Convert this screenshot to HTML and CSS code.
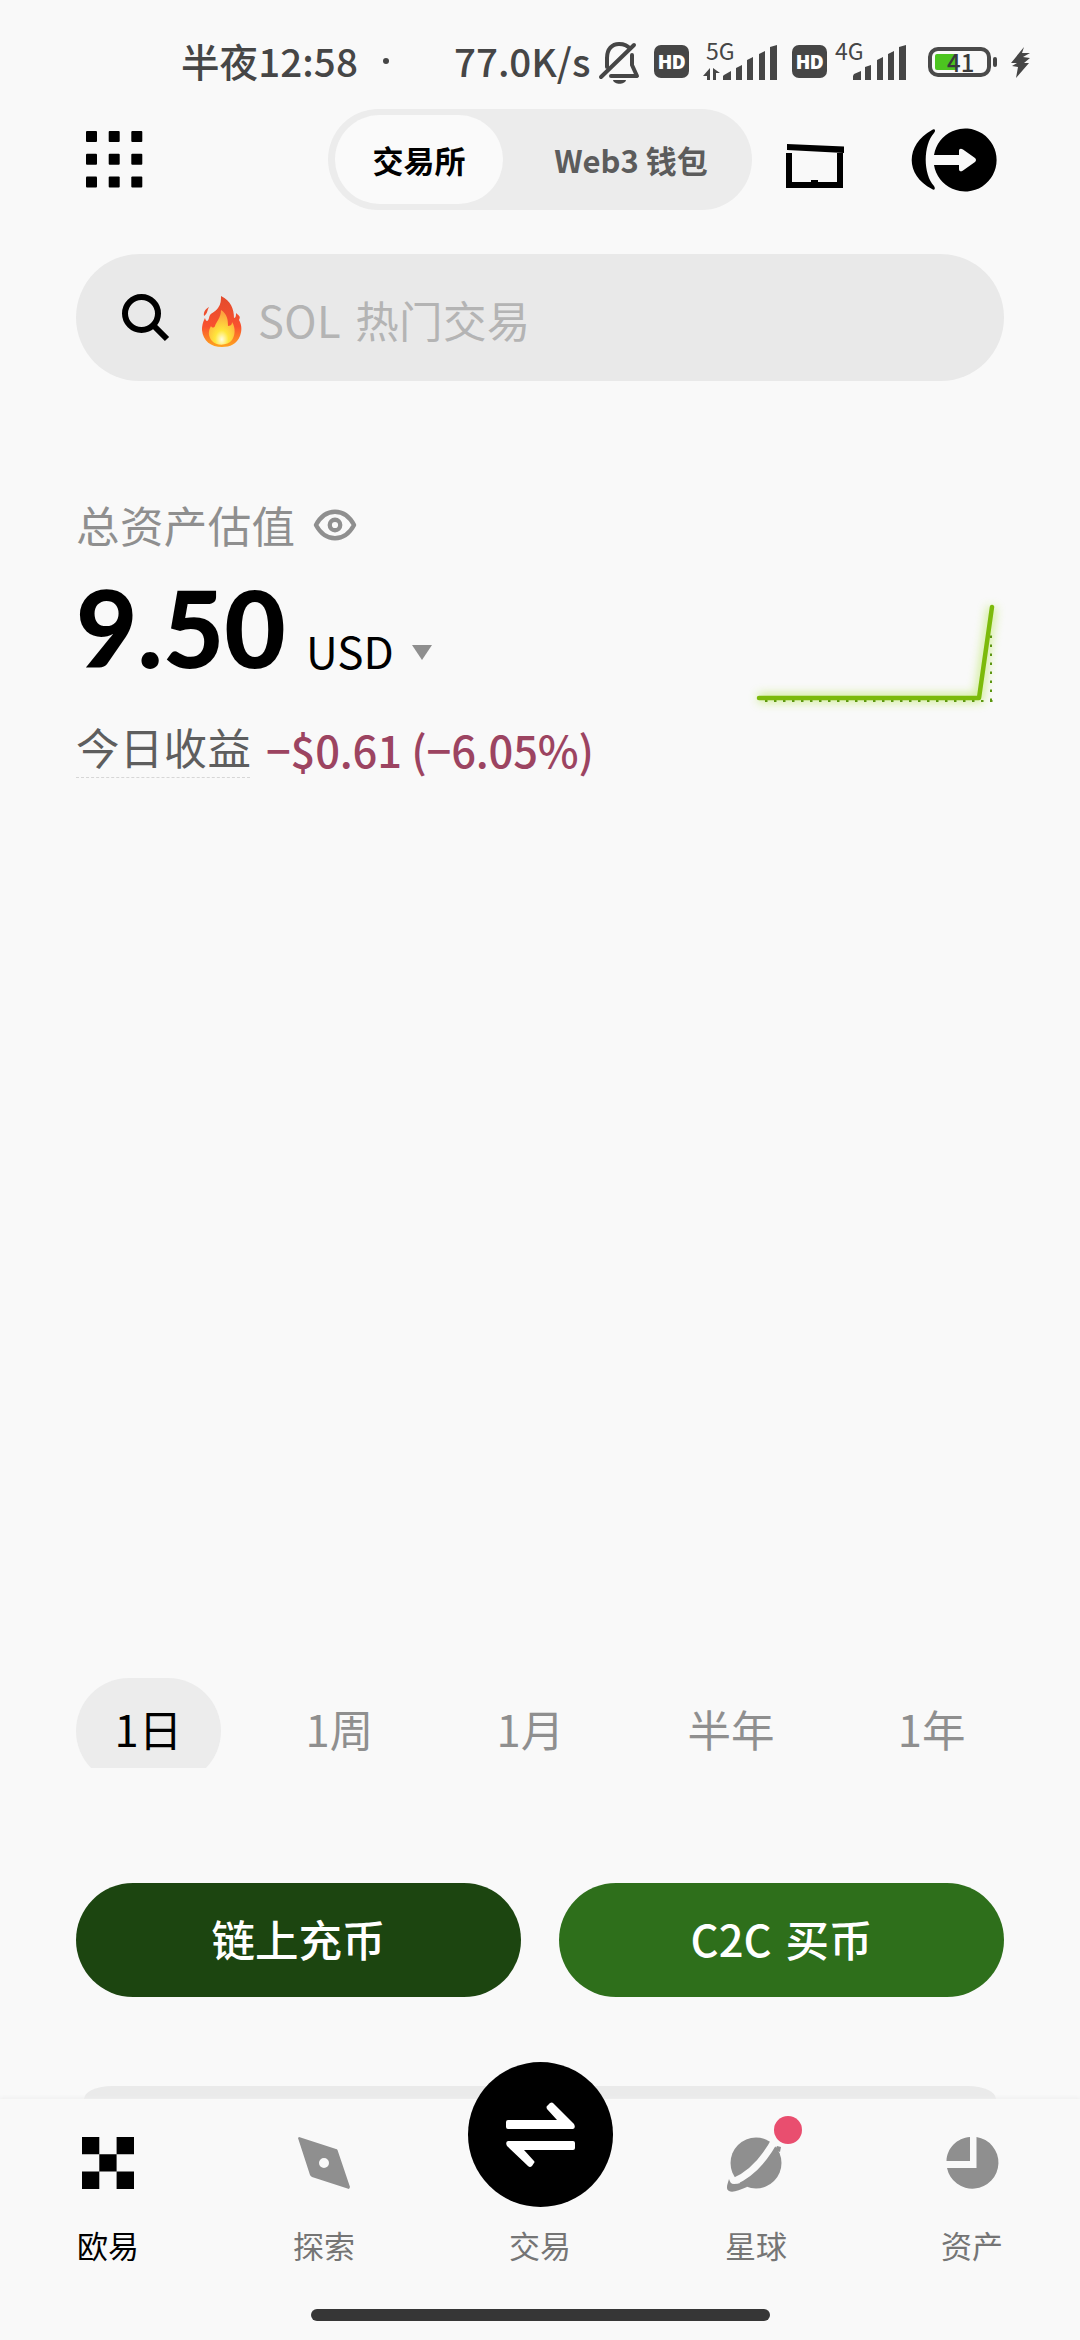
FILE: index.html
```html
<!DOCTYPE html>
<html lang="zh-CN">
<head>
<meta charset="utf-8">
<title>欧易</title>
<link rel="stylesheet" href="styles.css">
</head>
<body>
<div class="screen">
  <div class="status">
    <span class="clock">半夜12:58</span>
    <i class="dot"></i>
    <span class="speed">77.0K/s</span>
    <svg class="bell" width="41" height="45" viewBox="0 0 41 45" fill="none" stroke="#464646" stroke-width="4">
      <path d="M8 26V17C8 8 13 3 20 3C26 3 29 5 31 8M33 14V24L38 35H12M2 36L35 4" stroke-linejoin="round" stroke-linecap="round"/>
      <path d="M14 39H27C26 44 15 44 14 39Z" fill="#464646" stroke="none"/>
    </svg>
    <span class="hd">HD</span>
    <span class="cell cell-5g"><b>5G</b>
      <svg width="75" height="36" viewBox="0 0 75 36" fill="#464646"><path d="M7 23V35H4V31H0ZM10 35V23L17 28H13V35ZM21 30L28 26V35H20V31ZM33 23L39 20V35H33ZM44 15L50 12V35H44ZM56 9L62 6V35H56ZM67 2L74 0V35H67Z"/></svg>
    </span>
    <span class="hd">HD</span>
    <span class="cell cell-4g"><b>4G</b>
      <svg width="54" height="36" viewBox="0 0 54 36" fill="#464646"><path d="M1 29L8 26V35H0V31ZM12 22L18 20V35H12ZM24 15L30 12V35H24ZM35 9L41 6V35H35ZM46 2L53 0V35H46Z"/></svg>
    </span>
    <span class="battery"><i></i><b>41</b></span>
    <svg class="bolt" width="19" height="31" viewBox="0 0 19 31" fill="#464646"><path d="M13 0L0 16H6L1 19L7 20L5 31L18 16H13L19 11L12 10L19 6H11Z"/></svg>
  </div>

  <header class="header">
    <svg class="grid" width="57" height="57" viewBox="0 0 57 57"><g id="dots"><rect width="11" height="11" rx="1"/><rect x="22.7" width="11" height="11" rx="1"/><rect x="45.3" width="11" height="11" rx="1"/></g><use href="#dots" y="22.7"/><use href="#dots" y="45.5"/></svg>
    <div class="segment"><span class="seg seg-on">交易所</span><span class="seg seg-off">Web3 钱包</span></div>
    <svg class="window" width="58" height="44" viewBox="0 0 58 44"><path d="M1 0L58 2.500V9L1 6ZM0 9H6V38H25V36H32V38H51V9H57V44H0Z"/></svg>
    <svg class="scan" width="86" height="64" viewBox="0 0 86 64"><path d="M20 2C23 0 24 3 22 5C11 17 11 46 22 58C24 61 22 63 20 61C-7 47 -7 17 20 2Z"/><path d="M22 27A31.5 31.5 0 1 1 22 37H47V41C47 43.5 49 44 51 42.5L63 34Q65 32 63 30L51 21.5C49 20 47 20.500 47 23V27Z"/></svg>
  </header>

  <div class="search">
    <svg class="magnifier" width="48" height="48" viewBox="0 0 48 48" fill="none" stroke="#000" stroke-width="6"><circle cx="19.500" cy="19.500" r="16.500"/><path d="M31 31L45 45"/></svg>
    <svg class="flame" width="40" height="51" viewBox="0 0 40 51">
      <defs>
        <linearGradient id="outer" x1="0" y1="0" x2="0" y2="1"><stop offset="0" stop-color="#e24b2c"/><stop offset=".6" stop-color="#f9512f"/><stop offset="1" stop-color="#ffa51e"/></linearGradient>
        <radialGradient id="inner" cx=".5" cy=".85" r=".75"><stop offset="0" stop-color="#fffce0"/><stop offset=".35" stop-color="#ffe63c"/><stop offset="1" stop-color="#fda23f"/></radialGradient>
      </defs>
      <path fill="url(#outer)" d="M19 0C29 5 32 13 32 22C34 22 34 19 34 17C37 20 39 20 37 24C40 29 40 35 38 40C35 48 28 51 20 51C9 51 1 45 0 34C0 28 2 24 3 22C4 26 6 26 7 22C8 16 13 17 16 12C19 8 19 4 19 0ZM2 20C1 15 5 12 7 11C5 14 6 17 2 20Z"/>
      <path fill="url(#inner)" d="M19 14C25 18 26 23 26 30C30 30 30 27 30 26C34 32 33 40 30 44C26 50 14 50 10 45C6 40 6 35 9 30C10 32 12 32 13 30C14 26 19 22 19 14Z"/>
    </svg>
    <span class="hint">SOL 热门交易</span>
  </div>

  <section class="assets">
    <div class="title"><span>总资产估值</span>
      <svg width="42" height="32" viewBox="0 0 44 32" fill="none" stroke="#8f8f8f" stroke-width="4.500"><path d="M2 16C12-2.500 32-2.500 42 16C32 34.500 12 34.500 2 16Z" stroke-linejoin="round"/><circle cx="22" cy="16" r="5.500"/></svg>
    </div>
    <div class="balance">
      <span class="amount">9.50</span><span class="unit">USD</span>
      <svg class="caret" width="20" height="15" viewBox="0 0 20 15" fill="#8f8f8f"><path d="M0 0H20L10 15Z"/></svg>
      <svg class="chart" width="280" height="150" viewBox="0 0 280 150" fill="none">
        <defs><filter id="glow" x="-20%" y="-30%" width="140%" height="160%"><feGaussianBlur stdDeviation="5"/></filter></defs>
        <path d="M27 118H248L261 27" stroke="#a5e02d" stroke-width="9" opacity=".5" filter="url(#glow)"/>
        <path d="M34 121H262M260 121V50" stroke="#5c9610" stroke-width="2" stroke-dasharray="2.500 6.500"/>
        <path d="M28 118H248L261 27" stroke="#7cba0b" stroke-width="4.500" stroke-linecap="round" stroke-linejoin="round"/>
      </svg>
    </div>
    <div class="profit"><span class="today">今日收益</span><span class="loss">−$0.61 (−6.05%)</span></div>
  </section>

  <div class="ranges">
    <span class="range range-on">1日</span><span class="range">1周</span><span class="range">1月</span><span class="range">半年</span><span class="range">1年</span>
  </div>

  <div class="actions"><span class="btn btn-dark">链上充币</span><span class="btn btn-light">C2C 买币</span></div>

  <div class="peek"></div>

  <nav class="nav">
    <div class="tabs">
      <div class="tab tab-on">
        <svg width="52" height="52" viewBox="0 0 52 52"><path d="M0 0H17.300V17.300H34.600V0H52V17.300H34.600V34.600H52V52H34.600V34.600H17.300V52H0V34.600H17.300V17.300H0Z"/></svg>
        <span>欧易</span></div>
      <div class="tab">
        <svg width="52" height="52" viewBox="0 0 52 52"><path fill="#8f8f8f" fill-rule="evenodd" d="M0 1L1 0L38 12Q39 12 39.500 13L52 50L51 52L14 40Q12.500 39 12 38ZM26 21A5 5 0 1 0 26 31A5 5 0 1 0 26 21Z"/></svg>
        <span>探索</span></div>
      <div class="tab tab-trade">
        <div class="trade"><svg width="69" height="64" viewBox="0 0 69 64" fill="#fff"><path d="M2 17H51L41 6Q40 4 41 3L44 0Q46-1 47 0L68 21Q70 25 67 26H2Q0 26 0 24V19Q0 17 2 17ZM67 38H2Q-1 39 1 43L22 63Q24 65 26 63L28 60Q29 59 28 58L18 47H67Q69 47 69 45V40Q69 38 67 38Z"/></svg></div>
        <span>交易</span></div>
      <div class="tab">
        <svg width="52" height="52" viewBox="0 0 52 52"><circle cx="26" cy="26" r="25.500" fill="#8f8f8f"/><path d="M47-1C37 19 22 37 3 45" stroke="#f9f9f9" stroke-width="7" fill="none"/><path d="M47 9L51 10L50 15L45 13ZM-1 42C0 45 1 47 4 47C9 47 12 45 15 44L17 50C9 53 3 56-1 54C-5 52-2 46-1 42Z" fill="#8f8f8f"/></svg>
        <i class="badge"></i>
        <span>星球</span></div>
      <div class="tab">
        <svg width="52" height="52" viewBox="0 0 52 52" fill="#8f8f8f"><path d="M24 0V24H.5C1 11 11 1 24 0ZM30.500 0A26 26 0 1 1 1 31H30.500Z"/></svg>
        <span>资产</span></div>
    </div>
    <div class="home"></div>
  </nav>
</div>
</body>
</html>
```
FILE: styles.css
```css
* { box-sizing: border-box; }
body { margin: 0; background: #f9f9f9; font-family: "Noto Sans CJK SC", sans-serif; color: #000; }
svg { display: block; flex: none; overflow: visible; }
i, b { font-style: normal; font-weight: inherit; }
.screen { width: 1080px; height: 2340px; display: flex; flex-direction: column; overflow: hidden; white-space: nowrap; }

.status { height: 109px; display: flex; align-items: flex-start; padding: 41px 0 0 181px; color: #464646; }
.clock, .speed { font-size: 38.500px; line-height: 38px; font-weight: 500; flex: none; }
.clock { width: 202px; letter-spacing: 0.1px; }
.dot { width: 6px; height: 6px; border-radius: 50%; background: #464646; margin-top: 17px; }
.speed { width: 145px; margin-left: 65px; }
.hd { flex: none; width: 35px; height: 33px; margin-top: 4px; border-radius: 7px; background: #464646; color: #fff; font: 800 19px/34px "Open Sans", sans-serif; letter-spacing: -0.5px; text-align: center; }
.bell { margin: 0 14px 0 0; }
.cell { position: relative; flex: none; padding-top: 4px; }
.cell b { position: absolute; top: -2px; font: 400 23px/22px "Noto Sans CJK SC", sans-serif; }
.cell-5g { margin: 0 14px; }
.cell-5g b { left: 3px; }
.cell-4g { margin: 0 21px 0 26px; }
.cell-4g b { left: -18px; }
.battery { position: relative; flex: none; width: 63px; height: 30px; margin-top: 6px; border: 4px solid #4a4a4a; border-radius: 10px; }
.battery::after { content: ""; position: absolute; right: -10px; top: 6px; width: 4px; height: 10px; border-radius: 2px; background: #464646; }
.battery i { position: absolute; left: 3px; top: 3px; width: 22px; height: 16px; border-radius: 2px; background: #4cc41f; }
.battery b { position: absolute; left: 15px; top: 0; font: 500 24px/21px "Noto Sans CJK SC", sans-serif; color: #3a3a3a; }
.bolt { margin: 6px 0 0 20px; }

.header { height: 145px; display: flex; align-items: flex-start; padding-left: 86px; }
.grid { margin-top: 22px; }
.segment { width: 424px; height: 101px; margin-left: 185px; padding: 6px 7px; border-radius: 51px; background: #ececec; display: flex; }
.seg { font-size: 31px; font-weight: 700; line-height: 89px; text-align: center; }
.seg-on { width: 168px; border-radius: 45px; background: #fafafa; }
.seg-off { width: 242px; padding-left: 14px; color: #5c5c5c; }
.window { margin: 35px 0 0 34px; }
.scan { margin: 19px 0 0 68px; }

.search { height: 127px; margin: 0 76px; padding-left: 46px; border-radius: 64px; background: #e9e9e9; display: flex; align-items: center; }
.magnifier { margin-top: 1px; }
.flame { margin: 7px 0 0 32px; }
.hint { margin: 4px 0 0 16px; font-size: 43.500px; font-weight: 400; line-height: 60px; letter-spacing: 0.4px; word-spacing: 4px; color: #b4b4b4; }

.assets { padding: 111px 0 0 76px; height: 1297px; }
.title { display: flex; align-items: center; height: 68px; line-height: 60px; font-size: 43.500px; letter-spacing: 0.4px; color: #8f8f8f; gap: 18px; }
.title span { margin-top: -3px; }
.title svg { margin-top: -3px; }
.balance { display: flex; align-items: flex-start; height: 150px; }
.amount { width: 230px; font: 900 106px/135px Lato, sans-serif; letter-spacing: 0; }
.unit { width: 106px; font: 400 44px/60px "Noto Sans CJK SC", sans-serif; margin-top: 60px; }
.caret { margin-top: 85px; }
.chart { margin: 20px 0 0 299px; }
.profit { display: flex; align-items: center; font-size: 43.500px; line-height: 56px; height: 60px; margin-top: 10px; }
.today { width: 174px; height: 56px; line-height: 50px; border-bottom: 1px dashed #d6d6d6; letter-spacing: 0.3px; color: #5e5e5e; }
.loss { color: #9c4461; font-weight: 500; margin-left: 16px; letter-spacing: -0.2px; }

.ranges { height: 90px; margin: 0 76px; overflow: hidden; display: flex; justify-content: space-between; align-items: flex-start; }
.range { height: 106px; padding: 0 38.500px; border-radius: 53px; font-size: 43.500px; line-height: 101px; color: #8f8f8f; }
.range-on { background: #ececec; color: #000; }

.actions { display: flex; gap: 38px; margin: 115px 76px 0; }
.btn { flex: 1; height: 114px; border-radius: 57px; font-size: 43.500px; line-height: 112px; font-weight: 500; text-align: center; color: #fff; }
.btn-dark { background: #1c4510; }
.btn-light { background: #2e6f1b; word-spacing: 4px; }

.peek { height: 13px; margin: 89px 84px 0; border-radius: 28px 28px 0 0 / 13px 13px 0 0; background: #eaeaea; }
.nav { height: 241px; background: #f9f9f9; box-shadow: 0 -1px 4px #eee; }
.tabs { display: grid; grid-template-columns: repeat(5, 216px); height: 210px; }
.tab { position: relative; display: flex; flex-direction: column; align-items: center; padding-top: 38px; font-size: 31px; line-height: 44px; color: #757575; }
.tab span { margin-top: 34px; }
.tab-on { color: #000; }
.tab-trade { padding-top: 0; }
.tab-trade span { margin-top: 16px; }
.trade { width: 145px; height: 145px; margin-top: -37px; border-radius: 50%; background: #000; display: flex; align-items: center; justify-content: center; }
.badge { position: absolute; left: 126px; top: 17px; width: 28px; height: 28px; border-radius: 50%; background: #e94e6f; }
.home { width: 459px; height: 12px; margin: 0 auto; border-radius: 6px; background: #363636; }
```
